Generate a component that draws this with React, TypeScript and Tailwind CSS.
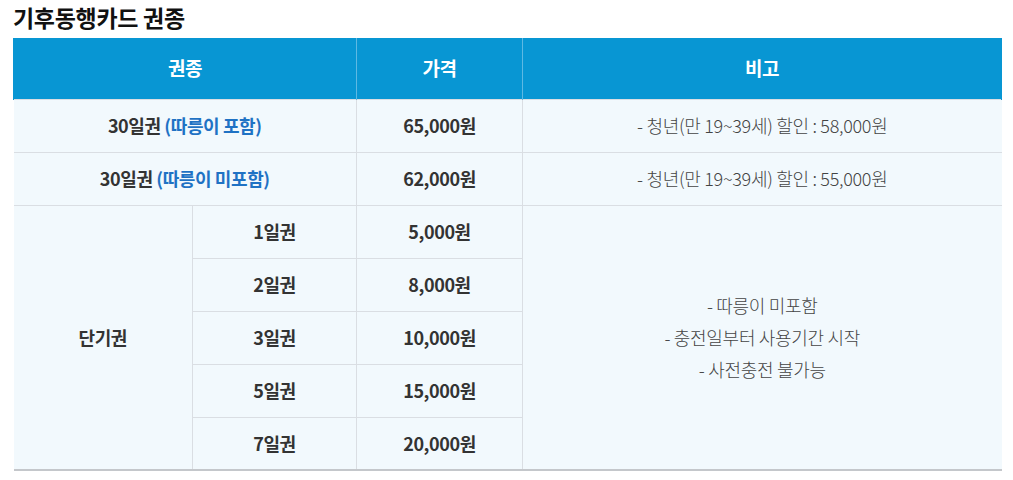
import React from "react";

const font = { fontFamily: '"Noto Sans CJK KR", "Noto Sans", sans-serif' };

export default function App() {
  const short = [
    ["1일권", "5,000원"],
    ["2일권", "8,000원"],
    ["3일권", "10,000원"],
    ["5일권", "15,000원"],
    ["7일권", "20,000원"],
  ];
  const td = "border border-[#dadee3] text-center align-middle";
  const rem = " font-light text-[18px] text-[#444] tracking-[-0.3px]";
  return (
    <div className="bg-white w-[1013px] h-[480px] px-[13px] pt-[2px]" style={font}>
      <h2 className="text-[23px] font-bold text-[#111] leading-[30px] tracking-[-0.3px] mb-[6px]">기후동행카드 권종</h2>
      <table className="w-[988px] border-collapse table-fixed text-[18px] text-[#333] tracking-[-0.4px]">
        <colgroup>
          <col className="w-[179px]" />
          <col className="w-[164px]" />
          <col className="w-[166px]" />
          <col className="w-[479px]" />
        </colgroup>
        <thead>
          <tr className="h-[61px] bg-[#0896d3] text-white text-[19px]">
            <th colSpan={2} className="border-x border-[#5eb9e3] border-l-[#0896d3] font-bold">권종</th>
            <th className="border-x border-[#5eb9e3] font-bold">가격</th>
            <th className="border-x border-[#5eb9e3] border-r-[#0896d3] font-bold">비고</th>
          </tr>
        </thead>
        <tbody className="bg-[#f2f9fd] font-bold">
          <tr className="h-[53px]">
            <td colSpan={2} className={td + " border-l-0"}>
              30일권 <span className="text-[#1f72c4]">(따릉이 포함)</span>
            </td>
            <td className={td}>65,000원</td>
            <td className={td + " border-r-0" + rem}>- 청년(만 19~39세) 할인 : 58,000원</td>
          </tr>
          <tr className="h-[53px]">
            <td colSpan={2} className={td + " border-l-0"}>
              30일권 <span className="text-[#1f72c4]">(따릉이 미포함)</span>
            </td>
            <td className={td}>62,000원</td>
            <td className={td + " border-r-0" + rem}>- 청년(만 19~39세) 할인 : 55,000원</td>
          </tr>
          {short.map(([d, p], i) => (
            <tr key={d} className={"h-[53px]" + (i === 4 ? " border-b-2 border-b-[#c4c7cb]" : "")}>
              {i === 0 && (
                <td rowSpan={5} className={td + " border-l-0 border-b-2 border-b-[#c4c7cb]"}>단기권</td>
              )}
              <td className={td + (i === 4 ? " border-b-2 border-b-[#c4c7cb]" : "")}>{d}</td>
              <td className={td + (i === 4 ? " border-b-2 border-b-[#c4c7cb]" : "")}>{p}</td>
              {i === 0 && (
                <td rowSpan={5} className={td + " border-r-0 border-b-2 border-b-[#c4c7cb] leading-[32px]" + rem}>
                  <div>- 따릉이 미포함</div>
                  <div>- 충전일부터 사용기간 시작</div>
                  <div>- 사전충전 불가능</div>
                </td>
              )}
            </tr>
          ))}
        </tbody>
      </table>
    </div>
  );
}
